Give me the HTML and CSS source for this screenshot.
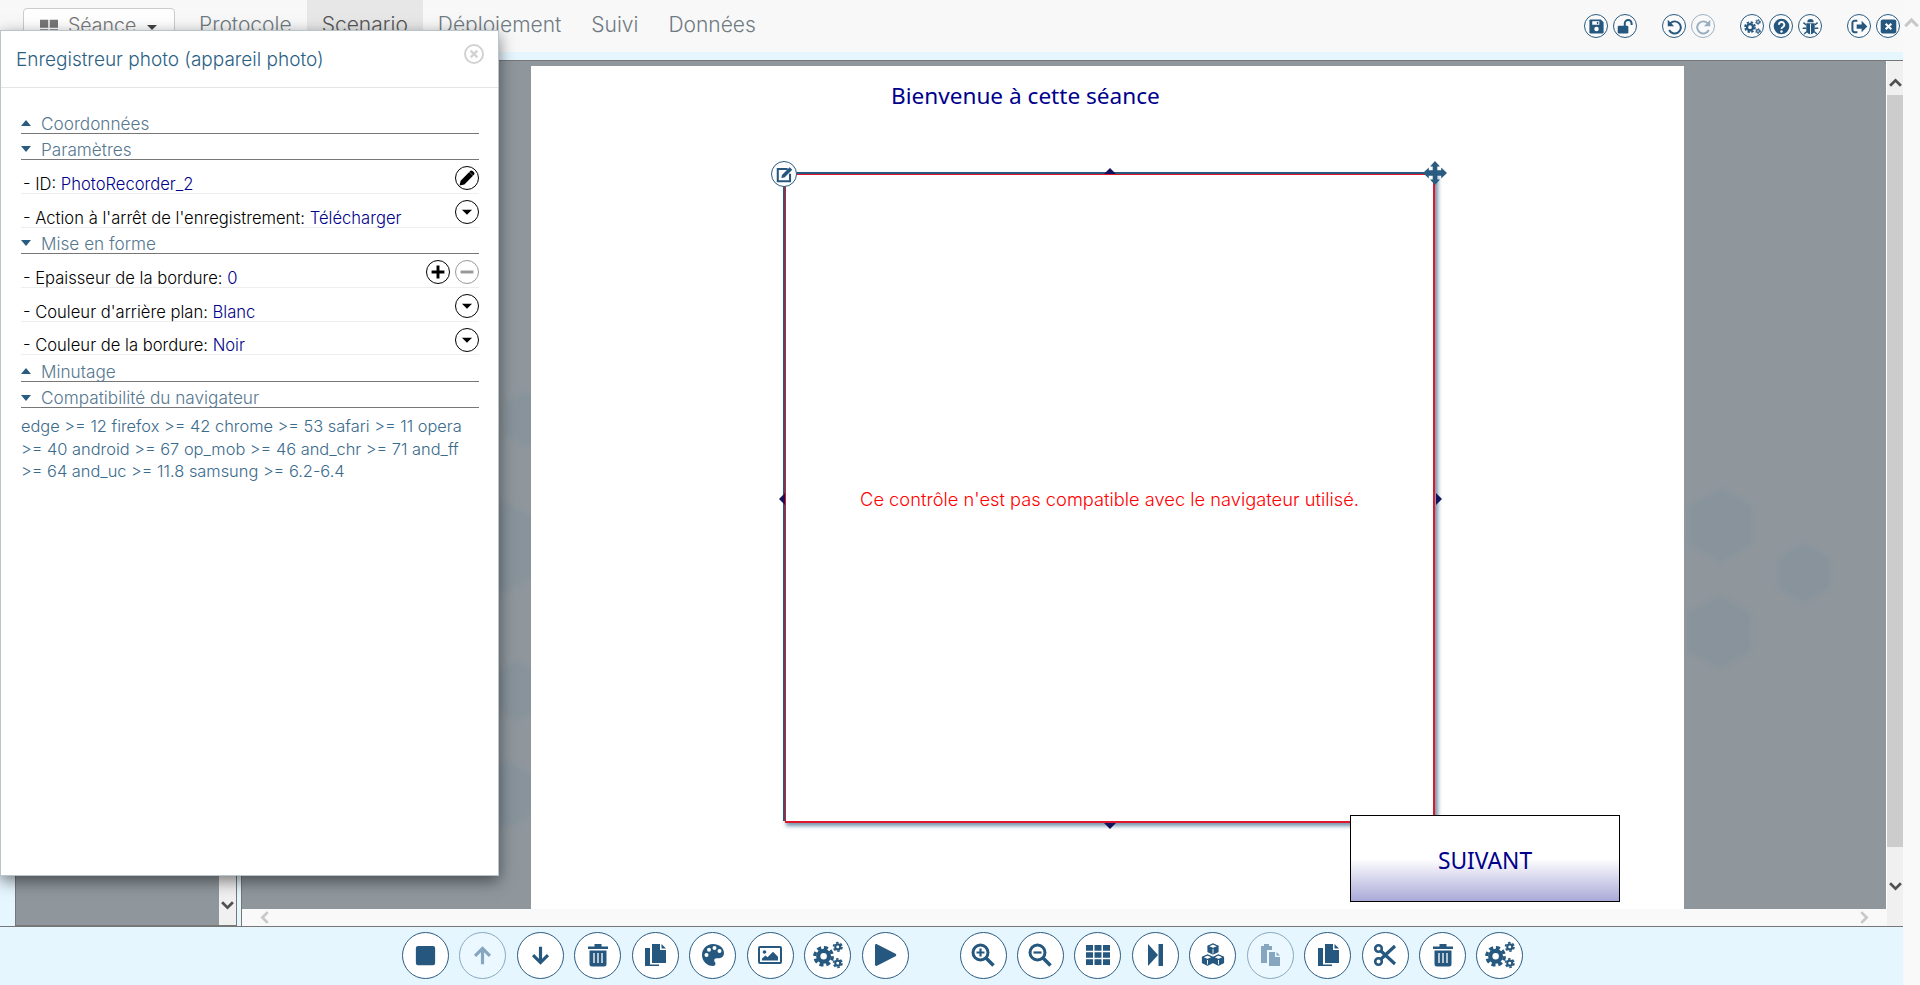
FILE: index.html
```html
<!DOCTYPE html>
<html lang="fr">
<head>
<meta charset="utf-8">
<title>Scenario</title>
<link rel="stylesheet" href="styles.css">
</head>
<body>
<svg class="sprite" xmlns="http://www.w3.org/2000/svg">
  <symbol id="i-stop" viewBox="0 0 24 24"><rect x="1" y="1" width="22" height="22" rx="2.5"/></symbol>
  <symbol id="i-up" viewBox="0 0 24 24"><path d="M12 22V4M3.500 12.500 12 4l8.500 8.500" fill="none" stroke="currentColor" stroke-width="3.600"/></symbol>
  <symbol id="i-down" viewBox="0 0 24 24"><path d="M12 2v18M3.500 11.500 12 20l8.500-8.500" fill="none" stroke="currentColor" stroke-width="3.600"/></symbol>
  <symbol id="i-trash" viewBox="0 0 24 24"><path d="M2 3.500h6.500V1h7v2.500H22V6H2zM3.500 7.500h17V21a2.500 2.500 0 0 1-2.500 2.500H6A2.500 2.500 0 0 1 3.500 21z"/><path d="M8 10v10M12 10v10M16 10v10" stroke="#fff" stroke-width="1.300"/></symbol>
  <symbol id="i-copy" viewBox="0 0 24 24"><path d="M9 1h8v6h6v13H9z"/><path d="M18.500 1 23 5.500h-4.500z"/><path d="M7 5H2v18h14v-1.500H7z"/></symbol>
  <symbol id="i-palette" viewBox="0 0 24 24"><path d="M12 1C5.500 1 1 6 1 12s4.800 11 11 11c1.600 0 2.500-1 2.500-2.400 0-.7-.3-1.200-.7-1.700-.3-.4-.6-.9-.6-1.500 0-1.300 1-2.200 2.400-2.200H18c3 0 5-2.300 5-5.200C23 4.800 18 1 12 1z"/><g fill="#fff"><circle cx="5.500" cy="12" r="2"/><circle cx="8" cy="6.800" r="2"/><circle cx="13.500" cy="5" r="2"/><circle cx="18.500" cy="8" r="2"/></g></symbol>
  <symbol id="i-image" viewBox="0 0 24 24"><rect x="1" y="4" width="22" height="16" rx="1" fill="none" stroke="currentColor" stroke-width="2"/><circle cx="6.500" cy="9" r="1.800"/><path d="M4 17.500v-2l3.500-3 2 1.800 5.500-5.500 5 5v3.700z"/></symbol>
  <symbol id="i-cogs" viewBox="0 0 24 24"><g fill="none" stroke="currentColor"><circle cx="8.500" cy="13" r="4.300" stroke-width="3.400"/><circle cx="8.500" cy="13" r="7" stroke-width="2.600" stroke-dasharray="3.300 2.200"/><circle cx="19.800" cy="5.500" r="2" stroke-width="1.700"/><circle cx="19.800" cy="5.500" r="3.400" stroke-width="1.300" stroke-dasharray="2 1.560"/><circle cx="19.800" cy="18.500" r="2" stroke-width="1.700"/><circle cx="19.800" cy="18.500" r="3.400" stroke-width="1.300" stroke-dasharray="2 1.560"/></g></symbol>
  <symbol id="i-play" viewBox="0 0 24 24"><path d="M2 2.500C2 1.300 3 .7 4 1.300l18.500 9.500c1 .5 1 1.900 0 2.400L4 22.700c-1 .6-2 0-2-1.200z"/></symbol>
  <symbol id="i-zoomin" viewBox="0 0 24 24"><circle cx="9.500" cy="9.500" r="7.500" fill="none" stroke="currentColor" stroke-width="3"/><path d="M15 15l7.500 7.500" stroke="currentColor" stroke-width="3.600"/><path d="M9.500 5.500v8M5.500 9.500h8" stroke="currentColor" stroke-width="2.200"/></symbol>
  <symbol id="i-zoomout" viewBox="0 0 24 24"><circle cx="9.500" cy="9.500" r="7.500" fill="none" stroke="currentColor" stroke-width="3"/><path d="M15 15l7.500 7.500" stroke="currentColor" stroke-width="3.600"/><path d="M5.500 9.500h8" stroke="currentColor" stroke-width="2.200"/></symbol>
  <symbol id="i-grid" viewBox="0 0 24 24"><path d="M0 2h7v5.700H0zM8.500 2h7v5.700h-7zM17 2h7v5.700h-7zM0 9.200h7v5.600H0zM8.500 9.200h7v5.600h-7zM17 9.200h7v5.600h-7zM0 16.300h7V22H0zM8.500 16.300h7V22h-7zM17 16.300h7V22h-7z"/></symbol>
  <symbol id="i-step" viewBox="0 0 24 24"><path d="M5 1l10 11L5 23zM15.500 1H20v22h-4.500z"/></symbol>
  <symbol id="i-cubes" viewBox="0 0 24 24"><g stroke="currentColor" stroke-width="1.200" stroke-linejoin="round"><path d="M12 1l5 2.200v5.500L12 11l-5-2.300V3.200z"/><path d="M12 1l5 2.200L12 5.500 7 3.200z" fill="#fff"/><path d="M6.500 12l5 2.200v5.600l-5 2.400-5-2.400v-5.600z"/><path d="M6.500 12l5 2.200-5 2.300-5-2.300z" fill="#fff"/><path d="M17.500 12l5 2.200v5.600l-5 2.400-5-2.400v-5.600z"/><path d="M17.500 12l5 2.200-5 2.300-5-2.300z" fill="#fff"/></g><path d="M12 6v4.500M6.500 17v4.500M17.500 17v4.500" stroke="#fff" stroke-width=".9"/></symbol>
  <symbol id="i-paste" viewBox="0 0 24 24"><path d="M3 3h3V1h5v2h3v4H9v13H3z"/><path d="M11 9h6v5h5v9H11z"/><path d="M18.500 9l3.500 3.500h-3.500z"/></symbol>
  <symbol id="i-cut" viewBox="0 0 24 24"><g fill="none" stroke="currentColor"><circle cx="5.500" cy="5.500" r="3.300" stroke-width="2.600"/><circle cx="5.500" cy="18.500" r="3.300" stroke-width="2.600"/><path d="M8 8l14 13M8 16L22 3" stroke-width="3.200"/></g></symbol>
  <symbol id="i-save" viewBox="0 0 24 24"><path d="M3 2h15l4 4v14a2 2 0 0 1-2 2H4a2 2 0 0 1-2-2V3z"/><path d="M6 4.500h10v5H6z" fill="#fff"/><path d="M12.500 5.500h2v3h-2z"/><circle cx="12" cy="15.500" r="3.200" fill="#fff"/></symbol>
  <symbol id="i-unlock" viewBox="0 0 24 24"><rect x="1" y="11" width="15" height="11" rx="1.800"/><path d="M11 12V7.500a4.800 4.800 0 0 1 9.600 0V10" fill="none" stroke="currentColor" stroke-width="2.800"/></symbol>
  <symbol id="i-undo" viewBox="0 0 24 24"><path d="M6 7.500a8.600 8.600 0 1 1-1.500 9.500" fill="none" stroke="currentColor" stroke-width="2.800"/><path d="M2.500 2.500v9h9z"/></symbol>
  <symbol id="i-redo" viewBox="0 0 24 24"><path d="M18 7.500a8.600 8.600 0 1 0 1.500 9.500" fill="none" stroke="currentColor" stroke-width="2.800"/><path d="M21.500 2.500v9h-9z"/></symbol>
  <symbol id="i-help" viewBox="0 0 24 24"><circle cx="12" cy="12" r="11"/><path d="M8.300 9.500A3.800 3.800 0 1 1 14 12.700c-1.300.7-2 1.300-2 2.800" fill="none" stroke="#fff" stroke-width="2.600"/><circle cx="12" cy="19" r="1.700" fill="#fff"/></symbol>
  <symbol id="i-bug" viewBox="0 0 24 24"><path d="M7.500 6a4.500 4.500 0 0 1 9 0z"/><path d="M6 7.500h12V17a6 6 0 0 1-12 0z"/><path d="M12 8v15" stroke="#fff" stroke-width="1.300"/><path d="M6 10 2 6.500M18 10l4-3.500M6 14.500H1M18 14.500h5M7 19l-4 3.500M17 19l4 3.500" stroke="currentColor" stroke-width="2"/></symbol>
  <symbol id="i-signout" viewBox="0 0 24 24"><path d="M9 4H5a3 3 0 0 0-3 3v10a3 3 0 0 0 3 3h4" fill="none" stroke="currentColor" stroke-width="2.800"/><path d="M8 9h7V4l8 8-8 8v-5H8z"/></symbol>
  <symbol id="i-close" viewBox="0 0 24 24"><rect x="1" y="2" width="22" height="20" rx="3"/><path d="M8 8l8 8M16 8l-8 8" stroke="#fff" stroke-width="3"/></symbol>
  <symbol id="i-pencil" viewBox="0 0 24 24"><path d="M2 22l1.500-6.500L15 4l5 5L8.500 20.500zM16.200 2.800c1-1 2.400-1 3.400 0l1.600 1.600c1 1 1 2.400 0 3.400l-1 1-5-5z"/></symbol>
  <symbol id="i-edit" viewBox="0 0 24 24"><path d="M16 5H3.500v15.500H19V11" fill="none" stroke="currentColor" stroke-width="2.600"/><path d="M8 16.500l.8-4L18.500 2.800l3.300 3.300L12 15.700z"/></symbol>
  <symbol id="i-move" viewBox="0 0 24 24"><path d="M12 0l5 5.500h-2.700v3.800h3.900V6.500L24 12l-5.800 5.500v-2.800h-3.900v3.900H17L12 24l-5-5.400h2.700v-3.900H5.800v2.800L0 12l5.800-5.500v2.800h3.900V5.500H7z"/></symbol>
  <symbol id="i-caret" viewBox="0 0 24 24"><path d="M6.500 9.500h11L12 15z"/></symbol>
  <symbol id="i-plus" viewBox="0 0 24 24"><path d="M12 5v14M5 12h14" stroke="currentColor" stroke-width="3.200"/></symbol>
  <symbol id="i-minus" viewBox="0 0 24 24"><path d="M5 12h14" stroke="currentColor" stroke-width="3.200"/></symbol>
  <symbol id="i-xthin" viewBox="0 0 24 24"><path d="M7.500 7.500l9 9M16.500 7.500l-9 9" stroke="currentColor" stroke-width="3"/></symbol>
  <symbol id="i-windows" viewBox="0 0 24 24"><path d="M0 1h11v10.500H0zM13 1h11v10.500H13zM0 13.500h11V24H0zM13 13.500h11V24H13z"/></symbol>
  <symbol id="i-chev-up" viewBox="0 0 24 24"><path d="M2 18 12 8l10 10" fill="none" stroke="currentColor" stroke-width="5"/></symbol>
  <symbol id="i-chev-down" viewBox="0 0 24 24"><path d="M2 6l10 10L22 6" fill="none" stroke="currentColor" stroke-width="5"/></symbol>
  <symbol id="i-chev-left" viewBox="0 0 24 24"><path d="M18 2 8 12l10 10" fill="none" stroke="currentColor" stroke-width="5"/></symbol>
  <symbol id="i-chev-right" viewBox="0 0 24 24"><path d="M6 2l10 10L6 22" fill="none" stroke="currentColor" stroke-width="5"/></symbol>
</svg>

<div class="page">
  <div class="window">
    <header class="topbar">
      <nav class="nav">
        <button class="session-btn"><svg class="session-icon"><use href="#i-windows"/></svg>Séance<span class="caret"></span></button>
        <a class="tab">Protocole</a>
        <a class="tab tab-active">Scenario</a>
        <a class="tab">Déploiement</a>
        <a class="tab">Suivi</a>
        <a class="tab">Données</a>
      </nav>
      <div class="tools">
        <div class="tool-group">
          <span class="tool"><svg><use href="#i-save"/></svg></span>
          <span class="tool"><svg><use href="#i-unlock"/></svg></span>
        </div>
        <div class="tool-group">
          <span class="tool"><svg><use href="#i-undo"/></svg></span>
          <span class="tool is-off"><svg><use href="#i-redo"/></svg></span>
        </div>
        <div class="tool-group">
          <span class="tool"><svg><use href="#i-cogs"/></svg></span>
          <span class="tool"><svg><use href="#i-help"/></svg></span>
          <span class="tool"><svg><use href="#i-bug"/></svg></span>
        </div>
        <div class="tool-group">
          <span class="tool"><svg><use href="#i-signout"/></svg></span>
          <span class="tool"><svg><use href="#i-close"/></svg></span>
        </div>
      </div>
    </header>
    <div class="band"></div>

    <main class="workspace">
      <aside class="list-pane">
        <div class="list-area"></div>
        <div class="vscroll vscroll-list">
          <svg class="chev chev-dark"><use href="#i-chev-down"/></svg>
        </div>
      </aside>
      <section class="stage-pane">
        <div class="stage-row">
          <div class="stage">
            <svg class="hexes" viewBox="0 0 1645 848" preserveAspectRatio="none">
              <g class="hex-group">
                <path d="M1480 427l32 18v38l-32 18-32-18v-38z"/>
                <path d="M1563 482l26 15v30l-26 15-26-15v-30z"/>
                <path d="M1478 534l32 18v38l-32 18-32-18v-38z"/>
                <path d="M285 330l24 14v28l-24 14-24-14v-28z"/>
                <path d="M262 440l40 23v46l-40 23-40-23v-46z"/>
                <path d="M275 600l26 15v30l-26 15-26-15v-30z"/>
                <path d="M265 700l30 17v34l-30 17-30-17v-34z"/>
              </g>
            </svg>
            <div class="canvas">
              <h1 class="welcome">Bienvenue à cette séance</h1>
              <div class="control">
                <p class="control-msg">Ce contrôle n'est pas compatible avec le navigateur utilisé.</p>
                <span class="handle handle-top"></span>
                <span class="handle handle-left"></span>
                <span class="handle handle-right"></span>
                <span class="handle handle-bottom"></span>
                <span class="edit-badge"><svg><use href="#i-edit"/></svg></span>
                <svg class="move-badge"><use href="#i-move"/></svg>
              </div>
              <div class="next-btn"><span>SUIVANT</span></div>
            </div>
          </div>
          <div class="vscroll vscroll-stage">
            <svg class="chev chev-dark chev-top"><use href="#i-chev-up"/></svg>
            <div class="thumb"></div>
            <svg class="chev chev-dark"><use href="#i-chev-down"/></svg>
          </div>
        </div>
        <div class="hscroll">
          <svg class="chev chev-light"><use href="#i-chev-left"/></svg>
          <svg class="chev chev-light"><use href="#i-chev-right"/></svg>
        </div>
      </section>
    </main>

    <footer class="bottombar">
      <div class="round-group">
        <span class="round"><svg class="s21"><use href="#i-stop"/></svg></span>
        <span class="round is-off"><svg class="s21"><use href="#i-up"/></svg></span>
        <span class="round"><svg class="s21"><use href="#i-down"/></svg></span>
        <span class="round"><svg><use href="#i-trash"/></svg></span>
        <span class="round"><svg><use href="#i-copy"/></svg></span>
        <span class="round"><svg><use href="#i-palette"/></svg></span>
        <span class="round"><svg><use href="#i-image"/></svg></span>
        <span class="round"><svg class="s30"><use href="#i-cogs"/></svg></span>
        <span class="round"><svg><use href="#i-play"/></svg></span>
      </div>
      <div class="round-group">
        <span class="round"><svg><use href="#i-zoomin"/></svg></span>
        <span class="round"><svg><use href="#i-zoomout"/></svg></span>
        <span class="round"><svg><use href="#i-grid"/></svg></span>
        <span class="round"><svg><use href="#i-step"/></svg></span>
        <span class="round"><svg><use href="#i-cubes"/></svg></span>
        <span class="round is-off"><svg><use href="#i-paste"/></svg></span>
        <span class="round"><svg><use href="#i-copy"/></svg></span>
        <span class="round"><svg><use href="#i-cut"/></svg></span>
        <span class="round"><svg><use href="#i-trash"/></svg></span>
        <span class="round"><svg class="s30"><use href="#i-cogs"/></svg></span>
      </div>
    </footer>
  </div>
  <div class="page-scroll">
    <svg class="chev chev-light"><use href="#i-chev-up"/></svg>
  </div>
</div>

<aside class="panel">
  <header class="panel-head">
    <h2 class="panel-title">Enregistreur photo (appareil photo)</h2>
    <span class="panel-close"><svg><use href="#i-xthin"/></svg></span>
  </header>
  <div class="panel-body">
    <div class="sec"><span class="tri tri-up"></span>Coordonnées</div>
    <div class="sec"><span class="tri tri-down"></span>Paramètres</div>
    <div class="row">
      <span class="row-text">- ID: <b class="val">PhotoRecorder_2</b></span>
      <span class="row-btns"><span class="mini"><svg class="s16"><use href="#i-pencil"/></svg></span></span>
    </div>
    <div class="row">
      <span class="row-text">- Action à l'arrêt de l'enregistrement: <b class="val">Télécharger</b></span>
      <span class="row-btns"><span class="mini"><svg><use href="#i-caret"/></svg></span></span>
    </div>
    <div class="sec"><span class="tri tri-down"></span>Mise en forme</div>
    <div class="row">
      <span class="row-text">- Epaisseur de la bordure: <b class="val">0</b></span>
      <span class="row-btns"><span class="mini"><svg><use href="#i-plus"/></svg></span><span class="mini is-off"><svg><use href="#i-minus"/></svg></span></span>
    </div>
    <div class="row">
      <span class="row-text">- Couleur d'arrière plan: <b class="val">Blanc</b></span>
      <span class="row-btns"><span class="mini"><svg><use href="#i-caret"/></svg></span></span>
    </div>
    <div class="row">
      <span class="row-text">- Couleur de la bordure: <b class="val">Noir</b></span>
      <span class="row-btns"><span class="mini"><svg><use href="#i-caret"/></svg></span></span>
    </div>
    <div class="sec"><span class="tri tri-up"></span>Minutage</div>
    <div class="sec"><span class="tri tri-down"></span>Compatibilité du navigateur</div>
    <p class="compat">edge &gt;= 12 firefox &gt;= 42 chrome &gt;= 53 safari &gt;= 11 opera &gt;= 40 android &gt;= 67 op_mob &gt;= 46 and_chr &gt;= 71 and_ff &gt;= 64 and_uc &gt;= 11.8 samsung &gt;= 6.2-6.4</p>
  </div>
</aside>
</body>
</html>
```
FILE: styles.css
```css
* { box-sizing: border-box; }
html, body { margin: 0; height: 100%; overflow: hidden; }
body { font-family: "Inter", "Liberation Sans", sans-serif; font-weight: 300; background: #f9f9f9; color: #000; }
.sprite { position: absolute; width: 0; height: 0; }

.page { display: flex; height: 985px; }
.window { width: 1903px; display: flex; flex-direction: column; }
.page-scroll { flex: 1; background: #f9f9f9; display: flex; justify-content: center; padding-top: 15px; }
.page-scroll .chev { width: 15px; height: 15px; }

.chev { display: block; width: 13px; height: 13px; fill: none; }
.chev-dark { color: #505050; }
.chev-light { color: #c8c8c8; }

/* top bar */
.topbar { height: 52px; background: #f8f8f8; display: flex; justify-content: space-between; align-items: stretch; }
.nav { display: flex; align-items: stretch; padding-left: 23px; font-size: 21px; color: #6f7a82; }
.session-btn { margin: 8px 9px 0 0; width: 152px; height: 40px; border: 1px solid #ccc; border-radius: 4px; background: #fff; color: #777; font: inherit; font-size: 19.500px; display: flex; align-items: center; padding: 0 0 6px 16px; }
.session-icon { width: 18px; height: 18px; fill: #777; margin-right: 10px; margin-top: 5px; }
.caret { margin: 5px 0 0 11px; border-top: 5px solid #444; border-left: 5px solid transparent; border-right: 5px solid transparent; }
.tab { padding: 0 15px 4px; display: flex; align-items: center; }
.tab-active { background: #e7e7e7; color: #555; }
.tools { display: flex; align-items: center; gap: 25px; padding-right: 3px; }
.tool-group { display: flex; gap: 5px; }
.tool { width: 24px; height: 24px; border: 1.5px solid #2a5b80; border-radius: 50%; background: #fbfbfb; color: #26587f; display: flex; align-items: center; justify-content: center; }
.tool svg { width: 17px; height: 17px; fill: currentColor; }
.tool.is-off { opacity: .45; }
.band { height: 8px; background: #e6f6ff; }

/* workspace */
.workspace { flex: 1; min-height: 0; display: flex; gap: 4px; padding-left: 15px; background: #e6f6ff; border-top: 1px solid #777; }
.list-pane { width: 222px; display: flex; background: #8f979d; border: solid #777; border-width: 0 1px 1px 1px; }
.list-area { flex: 1; }
.vscroll { width: 17px; background: #f0f0f0; display: flex; flex-direction: column; align-items: center; justify-content: flex-end; padding-bottom: 13px; }
.stage-pane { flex: 1; min-width: 0; display: flex; flex-direction: column; border-left: 1px solid #777; background: #f0f0f0; }
.stage-row { flex: 1; min-height: 0; display: flex; }
.stage { flex: 1; min-width: 0; position: relative; background: #8f979d; padding: 5px 202px 0 289px; border-right: 1px solid #fff; }
.hexes { position: absolute; left: 0; top: 0; width: 100%; height: 100%; filter: blur(2px); }
.hex-group { fill: #7f8f9a; opacity: .42; }
.canvas { position: relative; height: 100%; background: #fff; }
.vscroll-stage { width: 16px; padding: 0; justify-content: flex-start; }
.chev-top { margin: 15px 0 6px; }
.vscroll-stage .thumb { width: 100%; height: 752px; background: #ccc; margin-bottom: 33px; flex: none; }
.hscroll { height: 17px; margin-right: 16px; background: #f9f9f9; display: flex; justify-content: space-between; align-items: center; padding: 0 16px; }

/* canvas contents */
.welcome { position: absolute; left: 360px; top: 15px; margin: 0; font: 400 22.600px/30px "Noto Sans", sans-serif; color: #00008b; white-space: nowrap; }
.control { position: absolute; left: 254px; top: 108px; width: 650px; height: 649px; background: #fff; border: solid #e0162b; border-width: 1px 2px 2px 1px; box-shadow: -2px -2px 0 #28587e, 2px 2px 4px 1px rgba(40,88,126,.65); display: flex; align-items: center; justify-content: center; }
.control-msg { margin: 2px 0 0; font-size: 18.300px; color: #f00; }
.handle { position: absolute; width: 0; height: 0; border: 6px solid transparent; }
.handle-top { left: 318px; top: -7px; border-bottom-color: #14145c; border-top-width: 0; }
.handle-bottom { left: 318px; bottom: -8px; border-top-color: #14145c; border-bottom-width: 0; }
.handle-left { left: -7px; top: 318px; border-right-color: #14145c; border-left-width: 0; }
.handle-right { right: -9px; top: 318px; border-left-color: #14145c; border-right-width: 0; }
.edit-badge { position: absolute; left: -15px; top: -14px; width: 26px; height: 26px; border: 1px solid #2a5b80; border-radius: 50%; background: #fff; color: #26587f; display: flex; align-items: center; justify-content: center; }
.edit-badge svg { width: 19px; height: 19px; fill: currentColor; }
.move-badge { position: absolute; right: -14px; top: -14px; width: 24px; height: 24px; fill: #2a5b80; }
.next-btn { position: absolute; left: 819px; top: 749px; width: 270px; height: 87px; border: 1px solid #000; background: linear-gradient(#fff 0%, #fff 50%, #a9a9d8 100%); display: flex; align-items: center; justify-content: center; padding-top: 5px; font: 400 22.800px/1 "Noto Sans", sans-serif; color: #00008b; }

/* bottom bar */
.bottombar { height: 59px; background: #e6f6ff; border-top: 1px solid #777; display: flex; align-items: center; padding: 0 0 2px 402px; gap: 51px; }
.round-group { display: flex; gap: 10.450px; }
.round { width: 47px; height: 47px; border: 1px solid #2a5b80; border-radius: 50%; background: #fff; color: #26587f; display: flex; align-items: center; justify-content: center; }
.round svg { width: 24px; height: 24px; fill: currentColor; }
.round svg.s21 { width: 21px; height: 21px; }
.round svg.s30 { width: 30px; height: 30px; }
.round.is-off { opacity: .5; background: #f3fbff; }

/* properties panel */
.panel { position: absolute; left: 0; top: 30px; width: 499px; height: 846px; background: #fff; border: 1px solid #b9c4cb; box-shadow: 0 5px 15px rgba(0,0,0,.5); color: #2a5f85; }
.panel-head { height: 57px; border-bottom: 1px solid #e5e5e5; padding: 0 15px; display: flex; justify-content: space-between; align-items: center; }
.panel-title { margin: 0; font-size: 19px; font-weight: 300; color: #2a5f85; }
.panel-close { position: relative; top: -5px; left: 1px; width: 20px; height: 20px; border: 2px solid #d2d2d2; border-radius: 50%; color: #d2d2d2; display: flex; align-items: center; justify-content: center; }
.panel-close svg { width: 18px; height: 18px; fill: currentColor; flex: none; }
.panel-body { padding: 19px 19px 0 20px; }
.sec { height: 26.500px; border-bottom: 1px solid #777; display: flex; align-items: flex-end; font-size: 17.200px; line-height: 19px; color: #56778f; }
.tri { width: 10px; margin-right: 10px; align-self: center; border-left: 5px solid transparent; border-right: 5px solid transparent; position: relative; top: 3px; }
.tri-up { border-bottom: 6px solid #2a5b80; }
.tri-down { border-top: 6px solid #2a5b80; }
.row { height: 33.800px; border-bottom: 1px solid #eee; display: flex; justify-content: space-between; padding-left: 2px; }
.row-text { align-self: flex-end; font-size: 16.600px; line-height: 18px; white-space: pre-wrap; color: #000; }
.val { font-weight: 300; color: #00008b; }
.row-btns { display: flex; gap: 5px; padding-top: 6px; }
.mini { width: 24px; height: 24px; border: 1.5px solid #000; border-radius: 50%; background: #fff; color: #000; display: flex; align-items: center; justify-content: center; }
.mini svg { width: 22px; height: 22px; fill: currentColor; flex: none; }
.mini svg.s16 { width: 18px; height: 18px; }
.mini.is-off { opacity: .4; }
.compat { margin: 7px 0 0; font-size: 16.400px; line-height: 22.500px; color: #3a6a8c; }
```
